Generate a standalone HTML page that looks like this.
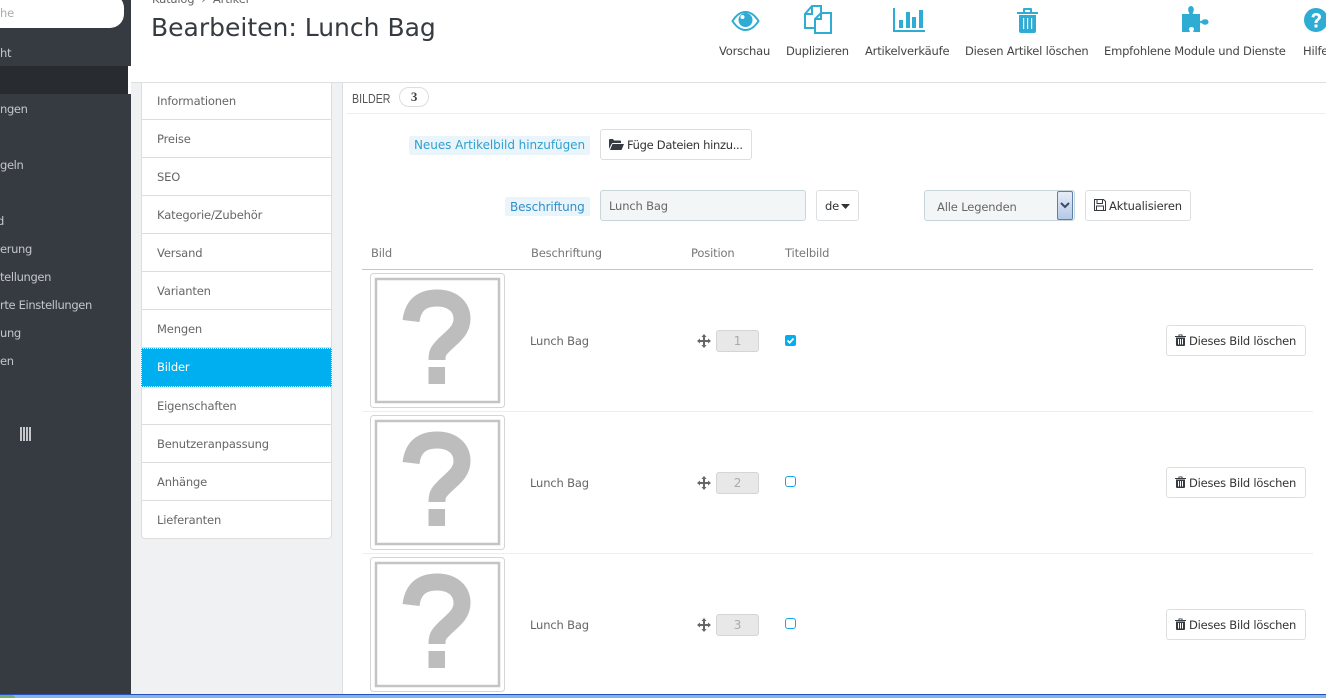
<!DOCTYPE html>
<html lang="de"><head><meta charset="utf-8"><title>Bearbeiten: Lunch Bag</title>
<style>
html,body{margin:0;padding:0;width:1326px;height:698px;overflow:hidden;background:#fff}
body{position:relative;font-family:"DejaVu Sans","Liberation Sans",sans-serif;font-size:11.5px;color:#666;letter-spacing:-.15px}
.a,.t{position:absolute}
.t{white-space:nowrap;line-height:16px}
.side{color:#c4c6c9;font-size:11.5px;letter-spacing:-.35px}
.m{position:absolute;left:142px;width:189px;height:37px;background:#fff;border-bottom:1px solid #ddd;line-height:38px;text-indent:15px;font-size:11.5px;color:#666}
.tb{position:absolute;top:43px;line-height:16px;font-size:11.5px;color:#444;white-space:nowrap;letter-spacing:-.2px}
.btn{position:absolute;box-sizing:border-box;background:#fff;border:1px solid #dcdfe2;border-radius:3px;color:#333;font-size:11.5px;line-height:30px;white-space:nowrap}
svg{position:absolute;display:block}
.th{position:absolute;font-size:11.5px;color:#777}
</style></head><body>

<div class="a" style="left:0;top:0;width:131px;height:694px;background:#363a41"></div>
<div class="a" style="left:-20px;top:-6px;width:144px;height:34px;background:#fff;border-radius:14px"></div>
<div class="t" style="left:0;top:5px;color:#aaa;font-size:11.5px">he</div>
<div class="a" style="left:0;top:66px;width:128px;height:28px;background:#282b30"></div>
<div class="a" style="left:128px;top:66px;width:3px;height:28px;background:#fff"></div>
<div class="t side" style="left:0;top:45px">ht</div>
<div class="t side" style="left:0;top:101px">ngen</div>
<div class="t side" style="left:0;top:157px">geln</div>
<div class="t side" style="left:-3px;top:213px">d</div>
<div class="t side" style="left:0;top:241px">erung</div>
<div class="t side" style="left:0;top:269px">tellungen</div>
<div class="t side" style="left:0;top:297px">rte Einstellungen</div>
<div class="t side" style="left:0;top:325px">ung</div>
<div class="t side" style="left:0;top:353px">en</div>
<svg style="left:20px;top:427px" width="11" height="14"><path d="M0 0h2v14H0zM3 0h2v14H3zM6 0h2v14H6zM9 0h2v14H9z" fill="#c4c6c9"/></svg>

<div class="t" style="left:152px;top:-9px;font-size:11.5px;color:#666">Katalog &nbsp;›&nbsp; Artikel</div>
<div class="t" style="left:151px;top:12px;font-size:25px;line-height:32px;color:#363a41;font-family:'DejaVu Sans',sans-serif;letter-spacing:0">Bearbeiten: Lunch Bag</div>

<svg style="left:731px;top:10px" width="29" height="22" viewBox="0 0 29 22"><path d="M1.500 11C6 4 10 2 14.500 2S23 4 27.500 11C23 18 19 20 14.500 20S6 18 1.500 11Z" fill="none" stroke="#2eacd3" stroke-width="2"/><circle cx="14.500" cy="10" r="7" fill="#2eacd3"/><circle cx="11.500" cy="7" r="2" fill="#fff"/></svg>
<svg style="left:804px;top:5px" width="28" height="29" viewBox="0 0 28 29"><path d="M10 23H1V9L8 1H17V7M8 1V9H1" fill="none" stroke="#2eacd3" stroke-width="2"/><path d="M11 28V14L17 8H27V28ZM17 8V14H11" fill="none" stroke="#2eacd3" stroke-width="2"/></svg>
<svg style="left:893px;top:8px" width="33" height="25" viewBox="0 0 33 25"><path d="M1 0V23H32" fill="none" stroke="#2eacd3" stroke-width="2"/><path d="M6 12h4v8H6zM13 4h4v16h-4zM19 9h4v11h-4zM26 2h4v18h-4z" fill="#2eacd3"/></svg>
<svg style="left:1016px;top:7px" width="23" height="26" viewBox="0 0 23 26"><path d="M1 5h21v2H1zM7 5V2Q7 1 8 1h7q1 0 1 1v3h-2V3H9v2zM3 8h17v16q0 2-2 2H5q-2 0-2-2zM7 11v11h1.200V11zM11 11v11h1.200V11zM15 11v11h1.200V11z" fill="#2eacd3" fill-rule="evenodd"/></svg>
<svg style="left:1182px;top:6px" width="27" height="26" viewBox="0 0 27 26"><path d="M0 8H6.500C7.500 8 7.500 7 7 6.500 5.500 4.500 6 0 9 0S12.500 4.500 11 6.500C10.500 7 10.500 8 11.500 8H18V14C18 15.500 19 15.500 20 14.500 22 12.500 26.500 13 26.500 16S22 19.500 20 17.500C19 16.500 18 16.500 18 18V26H12C11 26 11 25 11.500 24.500 12.500 23 12 21 9.500 21S6.500 23 7.500 24.500C8 25 8 26 7 26H0Z" fill="#2eacd3"/></svg>
<svg style="left:1304px;top:7px" width="24" height="26" viewBox="0 0 24 26"><circle cx="12" cy="13" r="12" fill="#2eacd3"/><path d="M7.500 10C8 7 10 6 12.200 6 15 6 17 7.500 17 10 17 13 13.500 13 13.500 16H10.500C10.500 12 14 12 14 10 14 9 13 8.500 12 8.500S10.500 9 10.300 10.500ZM10.500 17.500h3v3h-3z" fill="#fff"/></svg>

<div class="tb" style="left:719px">Vorschau</div>
<div class="tb" style="left:786px">Duplizieren</div>
<div class="tb" style="left:865px">Artikelverkäufe</div>
<div class="tb" style="left:965px">Diesen Artikel löschen</div>
<div class="tb" style="left:1104px">Empfohlene Module und Dienste</div>
<div class="tb" style="left:1303px">Hilfe</div>

<div class="a" style="left:131px;top:82px;width:1195px;height:1px;background:#dfdfdf"></div>
<div class="a" style="left:131px;top:83px;width:211px;height:611px;background:#eff1f2"></div>
<div class="a" style="left:342px;top:83px;width:1px;height:611px;background:#dcdfe2"></div>

<div class="a" style="left:141px;top:83px;width:191px;height:456px;background:#ddd;border-radius:0 0 4px 4px"></div>
<div class="m" style="top:83px;height:36px;line-height:36px">Informationen</div>
<div class="m" style="top:120px">Preise</div>
<div class="m" style="top:158px">SEO</div>
<div class="m" style="top:196px">Kategorie/Zubehör</div>
<div class="m" style="top:234px">Versand</div>
<div class="m" style="top:272px">Varianten</div>
<div class="m" style="top:310px;line-height:39px">Mengen</div>
<div class="a" style="left:141px;top:348px;width:191px;height:39px;box-sizing:border-box;background:#00aff0;border:1px dotted #fff;color:#fff;line-height:37px;text-indent:15px;font-size:11.5px">Bilder</div>
<div class="m" style="top:387px">Eigenschaften</div>
<div class="m" style="top:425px">Benutzeranpassung</div>
<div class="m" style="top:463px">Anhänge</div>
<div class="m" style="top:501px;border-bottom:0;border-radius:0 0 3px 3px">Lieferanten</div>

<div class="t" style="left:352px;top:91px;font-family:'Liberation Sans',sans-serif;font-size:13px;color:#555;letter-spacing:0;transform:scaleX(.82);transform-origin:left">BILDER</div>
<div class="a" style="left:399px;top:87px;width:28px;height:18px;border:1px solid #ddd;border-radius:10px;text-align:center;line-height:18px;font-family:'Liberation Serif',serif;font-weight:bold;font-size:13px;color:#444">3</div>
<div class="a" style="left:346px;top:113px;width:980px;height:1px;background:#eee"></div>

<div class="a" style="left:409px;top:136px;width:181px;height:19px;background:#eaf5fb;border-radius:2px"></div>
<div class="t" style="left:414px;top:137px;color:#2f9fd0;font-size:12px;letter-spacing:-.05px">Neues Artikelbild hinzufügen</div>
<div class="btn" style="left:600px;top:129px;width:152px;height:31px;padding-left:26px;letter-spacing:-.3px">Füge Dateien hinzu...</div>
<svg style="left:609px;top:139px" width="15" height="11" viewBox="0 0 15 11"><path d="M0 10V1Q0 0 1 0H4L5 1.500H11Q12 1.500 12 2.500V4H4Q3 4 2.500 5Z M1 11L3.500 5H15L12.500 11Z" fill="#363a41"/></svg>

<div class="a" style="left:505px;top:197px;width:85px;height:19px;background:#eaf5fb;border-radius:2px"></div>
<div class="t" style="left:510px;top:199px;color:#2f8fc8;font-size:12px;letter-spacing:-.1px">Beschriftung</div>
<div class="a" style="left:600px;top:190px;width:204px;height:29px;background:#f3f6f7;border:1px solid #c7d6db;border-radius:3px;line-height:30px;text-indent:8px;color:#666;font-size:11.5px">Lunch Bag</div>
<div class="btn" style="left:816px;top:190px;width:43px;height:31px;padding-left:8px">de</div>
<svg style="left:841px;top:204px" width="9" height="5"><path d="M0 0h9L4.500 5z" fill="#333"/></svg>

<div class="a" style="left:924px;top:190px;width:149px;height:29px;background:#f3f6f7;border:1px solid #c7d6db;border-radius:3px;line-height:32px;text-indent:12px;color:#666;font-size:11.5px">Alle Legenden</div>
<div class="a" style="left:1057px;top:191px;width:16px;height:29px;box-sizing:border-box;border:1px solid #5f7fa8;border-radius:2px;background:linear-gradient(#e6edf7,#b4c9e6)"></div>
<svg style="left:1060px;top:202px" width="10" height="7"><path d="M1 1L5 5L9 1" fill="none" stroke="#3a4a66" stroke-width="2"/></svg>

<div class="btn" style="left:1085px;top:190px;width:106px;height:31px;padding-left:23px">Aktualisieren</div>
<svg style="left:1094px;top:199px" width="12" height="12" viewBox="0 0 12 12"><path d="M.5.500H9.500L11.500 2.500V11.500H.5ZM3 .5V4.500H8.500V.5M2.500 11.500V7H9.500V11.500" fill="none" stroke="#363a41"/></svg>

<div class="th" style="left:371px;top:246px">Bild</div>
<div class="th" style="left:531px;top:246px">Beschriftung</div>
<div class="th" style="left:691px;top:246px">Position</div>
<div class="th" style="left:785px;top:246px">Titelbild</div>
<div class="a" style="left:362px;top:269px;width:951px;height:1px;background:#a5cfe6"></div>
<div class="a" style="left:362px;top:411px;width:951px;height:1px;background:#eee"></div>
<div class="a" style="left:362px;top:553px;width:951px;height:1px;background:#eee"></div>

<svg style="left:370px;top:273px" width="135" height="135" viewBox="0 0 135 135"><rect x=".5" y=".5" width="134" height="134" rx="3" fill="#fff" stroke="#d5d5d5"/><rect x="6" y="6" width="123" height="123" fill="none" stroke="#c4c4c4" stroke-width="2.500"/><path d="M41 48C43 32 52 25 67 25 83 25 92 34 92 46 92 58 82 64 74 72 68 78 67 80 67 87" fill="none" stroke="#bdbdbd" stroke-width="17"/><path d="M58.500 94H75V111H58.500Z" fill="#bdbdbd"/></svg>
<svg style="left:370px;top:415px" width="135" height="135" viewBox="0 0 135 135"><rect x=".5" y=".5" width="134" height="134" rx="3" fill="#fff" stroke="#d5d5d5"/><rect x="6" y="6" width="123" height="123" fill="none" stroke="#c4c4c4" stroke-width="2.500"/><path d="M41 48C43 32 52 25 67 25 83 25 92 34 92 46 92 58 82 64 74 72 68 78 67 80 67 87" fill="none" stroke="#bdbdbd" stroke-width="17"/><path d="M58.500 94H75V111H58.500Z" fill="#bdbdbd"/></svg>
<svg style="left:370px;top:557px" width="135" height="135" viewBox="0 0 135 135"><rect x=".5" y=".5" width="134" height="134" rx="3" fill="#fff" stroke="#d5d5d5"/><rect x="6" y="6" width="123" height="123" fill="none" stroke="#c4c4c4" stroke-width="2.500"/><path d="M41 48C43 32 52 25 67 25 83 25 92 34 92 46 92 58 82 64 74 72 68 78 67 80 67 87" fill="none" stroke="#bdbdbd" stroke-width="17"/><path d="M58.500 94H75V111H58.500Z" fill="#bdbdbd"/></svg>

<div class="t" style="left:530px;top:333px;color:#666;font-size:11.5px">Lunch Bag</div>
<div class="t" style="left:530px;top:475px;color:#666;font-size:11.5px">Lunch Bag</div>
<div class="t" style="left:530px;top:617px;color:#666;font-size:11.5px">Lunch Bag</div>

<svg style="left:697px;top:334px" width="14" height="14" viewBox="0 0 14 14"><path d="M7 0L9.500 3H8V6H11V4.500L14 7L11 9.500V8H8V11H9.500L7 14L4.500 11H6V8H3V9.500L0 7L3 4.500V6H6V3H4.500Z" fill="#666"/></svg>
<svg style="left:697px;top:476px" width="14" height="14" viewBox="0 0 14 14"><path d="M7 0L9.500 3H8V6H11V4.500L14 7L11 9.500V8H8V11H9.500L7 14L4.500 11H6V8H3V9.500L0 7L3 4.500V6H6V3H4.500Z" fill="#666"/></svg>
<svg style="left:697px;top:618px" width="14" height="14" viewBox="0 0 14 14"><path d="M7 0L9.500 3H8V6H11V4.500L14 7L11 9.500V8H8V11H9.500L7 14L4.500 11H6V8H3V9.500L0 7L3 4.500V6H6V3H4.500Z" fill="#666"/></svg>

<div class="a" style="left:716px;top:330px;width:41px;height:20px;background:#e8e8e8;border:1px solid #d5d5d5;border-radius:3px;text-align:center;line-height:21px;color:#aaa;font-size:12px">1</div>
<div class="a" style="left:716px;top:472px;width:41px;height:20px;background:#e8e8e8;border:1px solid #d5d5d5;border-radius:3px;text-align:center;line-height:21px;color:#aaa;font-size:12px">2</div>
<div class="a" style="left:716px;top:614px;width:41px;height:20px;background:#e8e8e8;border:1px solid #d5d5d5;border-radius:3px;text-align:center;line-height:21px;color:#aaa;font-size:12px">3</div>

<svg style="left:785px;top:335px" width="11" height="11" viewBox="0 0 11 11"><rect width="11" height="11" rx="2" fill="#00aff0"/><path d="M2.500 5.500L4.700 7.700L8.500 3.500" fill="none" stroke="#fff" stroke-width="1.800"/></svg>
<div class="a" style="left:785px;top:476px;width:9px;height:9px;border:1px solid #12a5f0;border-radius:3px;background:#fff"></div>
<div class="a" style="left:785px;top:618px;width:9px;height:9px;border:1px solid #12a5f0;border-radius:3px;background:#fff"></div>

<div class="btn" style="left:1166px;top:325px;width:140px;height:31px;padding-left:22px;letter-spacing:-.22px">Dieses Bild löschen</div>
<div class="btn" style="left:1166px;top:467px;width:140px;height:31px;padding-left:22px;letter-spacing:-.22px">Dieses Bild löschen</div>
<div class="btn" style="left:1166px;top:609px;width:140px;height:31px;padding-left:22px;letter-spacing:-.22px">Dieses Bild löschen</div>
<svg style="left:1175px;top:334px" width="11" height="12" viewBox="0 0 11 12"><path d="M0 2h11v1H0zM3.500 2V.5H7.500V2H6.500V1.300H4.500V2zM1 3.500h9V11q0 1-1 1H2q-1 0-1-1zM3 5v5.500h1V5zM5 5v5.500h1V5zM7 5v5.500h1V5z" fill="#363a41" fill-rule="evenodd"/></svg>
<svg style="left:1175px;top:476px" width="11" height="12" viewBox="0 0 11 12"><path d="M0 2h11v1H0zM3.500 2V.5H7.500V2H6.500V1.300H4.500V2zM1 3.500h9V11q0 1-1 1H2q-1 0-1-1zM3 5v5.500h1V5zM5 5v5.500h1V5zM7 5v5.500h1V5z" fill="#363a41" fill-rule="evenodd"/></svg>
<svg style="left:1175px;top:618px" width="11" height="12" viewBox="0 0 11 12"><path d="M0 2h11v1H0zM3.500 2V.5H7.500V2H6.500V1.300H4.500V2zM1 3.500h9V11q0 1-1 1H2q-1 0-1-1zM3 5v5.500h1V5zM5 5v5.500h1V5zM7 5v5.500h1V5z" fill="#363a41" fill-rule="evenodd"/></svg>

<div class="a" style="left:0;top:694px;width:1326px;height:1px;background:#2a50b8"></div>
<div class="a" style="left:0;top:695px;width:1326px;height:3px;background:#7fb5ee"></div>
<div class="a" style="left:0;top:695px;width:15px;height:3px;background:#6fae6a;border-radius:0 4px 0 0"></div>
</body></html>
